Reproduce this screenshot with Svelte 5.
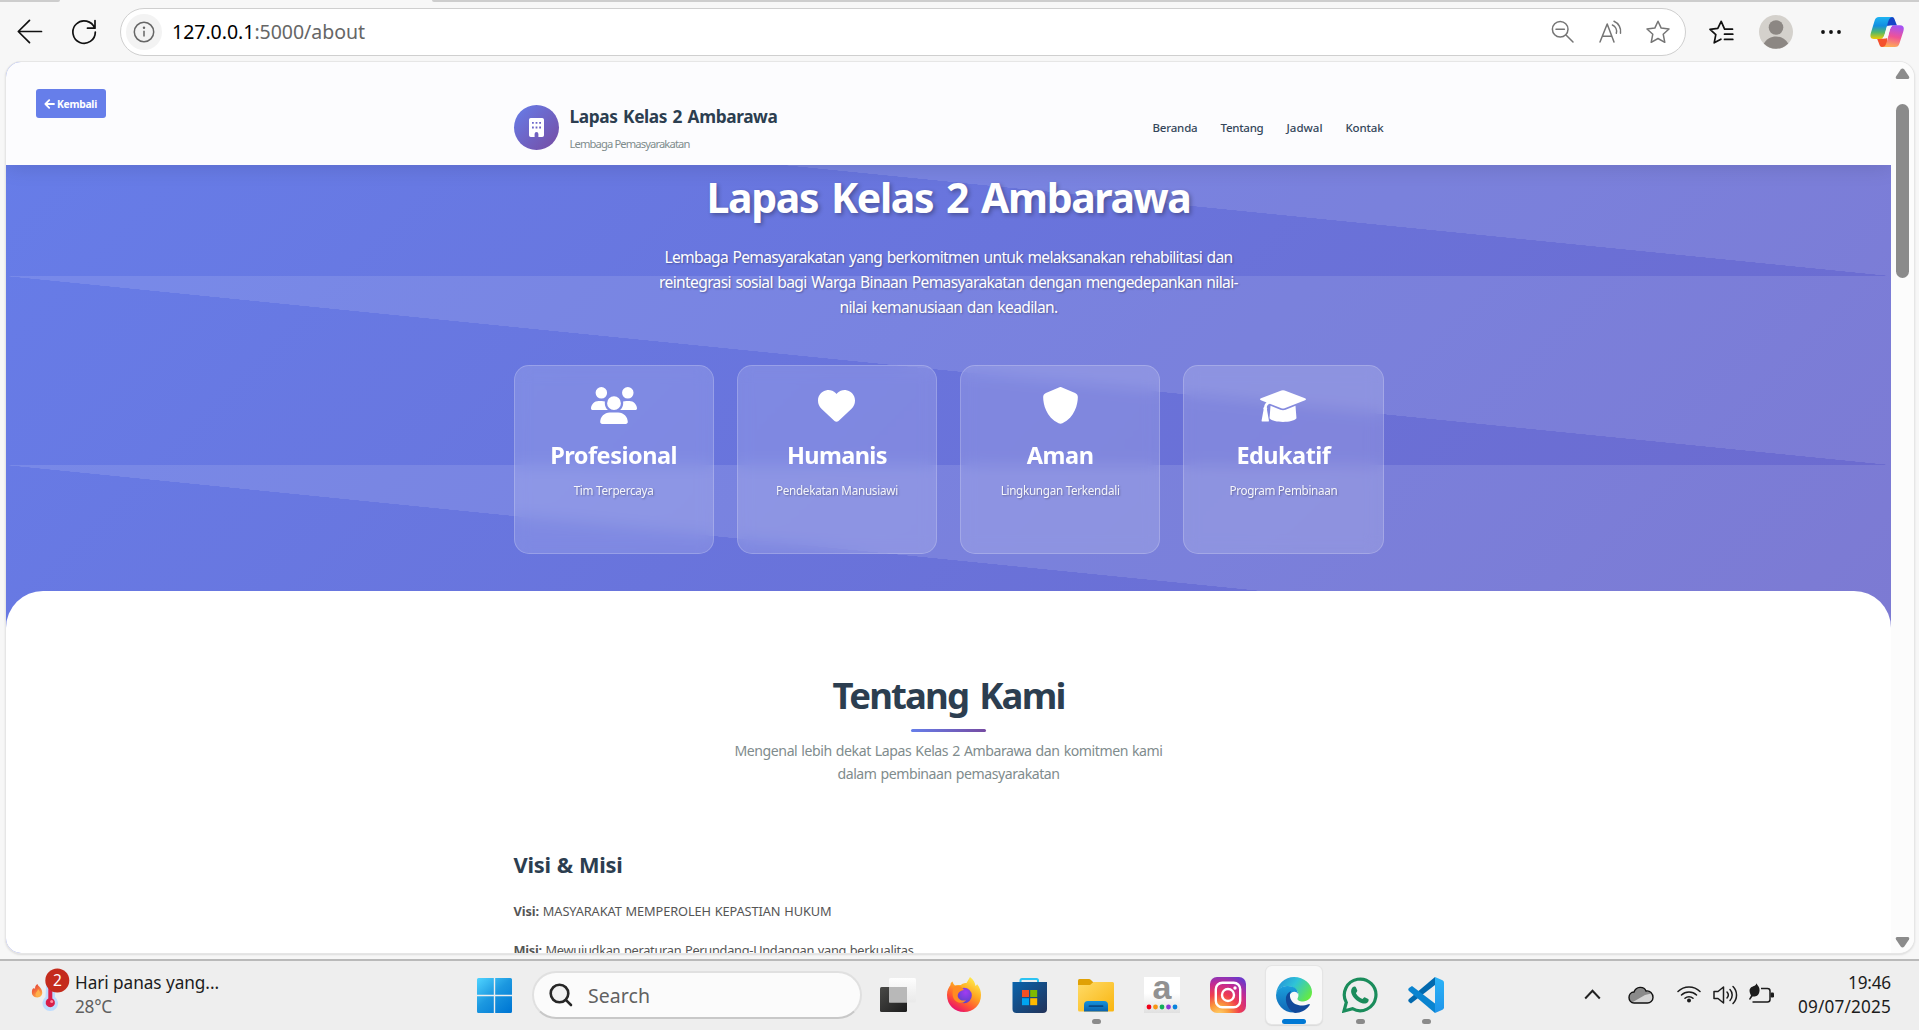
<script>
  // Spreads letter spacing so a label fills the given width in pixels.
  function fit(node, width) {
    const natural = node.getBoundingClientRect().width;
    const count = node.textContent.length;
    node.style.letterSpacing = `${(width - natural) / count}px`;
  }

  const nav = [
    { label: 'Beranda', w: 45 },
    { label: 'Tentang', w: 43 },
    { label: 'Jadwal', w: 36 },
    { label: 'Kontak', w: 38 }
  ];

  const intro = [
    { text: 'Lembaga Pemasyarakatan yang berkomitmen untuk melaksanakan rehabilitasi dan', w: 568 },
    { text: 'reintegrasi sosial bagi Warga Binaan Pemasyarakatan dengan mengedepankan nilai-', w: 579 },
    { text: 'nilai kemanusiaan dan keadilan.', w: 218 }
  ];

  const cards = [
    { icon: 'users', title: 'Profesional', tw: 127, text: 'Tim Terpercaya', w: 80 },
    { icon: 'heart', title: 'Humanis', tw: 100, text: 'Pendekatan Manusiawi', w: 122 },
    { icon: 'shield', title: 'Aman', tw: 67, text: 'Lingkungan Terkendali', w: 119 },
    { icon: 'cap', title: 'Edukatif', tw: 94, text: 'Program Pembinaan', w: 108 }
  ];
</script>

<div class="screen">
  <div class="tabs"><span class="tab-left"></span><span class="tab-right"></span></div>
  <div class="toolbar">
    <svg class="back" width="26" height="26" viewBox="0 0 26 26"><path d="M24.500 12.500H1.500M12.500 1.300L1.300 12.500 12.500 23.700" /></svg>
    <svg class="reload" width="26" height="26" viewBox="0 0 26 26"><path d="M23.600 9.200A11.200 11.200 0 1 0 24.300 13M24 1.500V9.200H16.500" /></svg>
    <div class="address">
      <span class="info">
        <svg width="22" height="22" viewBox="0 0 22 22"><circle cx="11" cy="11" r="9.700" /><path d="M11 9.800V15.600" /><circle class="dot" cx="11" cy="6.700" r="1.200" /></svg>
      </span>
      <span class="url" use:fit={193}><b>127.0.0.1</b>:5000/about</span>
      <svg class="tool zoomout" width="24" height="24" viewBox="0 0 24 24"><circle cx="9.200" cy="9.200" r="7.800" /><path d="M15 15L22 22M5 9.200H13.400" /></svg>
      <svg class="tool aloud" width="24" height="24" viewBox="0 0 24 24"><path d="M1 22L8.200 4 15 22M3.400 16.200H12.800M13.400 5A7 7 0 0 1 17.300 13.200M15 1.200A11 11 0 0 1 21.500 13.200" /></svg>
      <svg class="tool star" width="26" height="26" viewBox="0 0 26 26"><path d="M13 2.200L16.200 9.100 24 10 18.200 15.200 19.800 23.300 13 19.500 6.200 23.300 7.800 15.200 2 10 9.800 9.100Z" /></svg>
    </div>
    <svg class="favs" width="26" height="26" viewBox="0 0 26 26"><path d="M24.500 10.200H16.600L13.200 2.400 9.800 9.400 2 10.300 7.800 15.600 6.200 23.800 12.900 20.200M16.500 15.200H24.800M16.500 20.400H24.800" /></svg>
    <svg class="avatar" width="34" height="34" viewBox="0 0 34 34"><circle cx="17" cy="17" r="17" fill="#d4d1cc" /><circle cx="17" cy="12.500" r="7.300" fill="#8c8783" /><path d="M4.800 28.600C7.600 23.800 12 21.400 17 21.400S26.400 23.800 29.200 28.600A17 17 0 0 1 4.800 28.600Z" fill="#8c8783" /></svg>
    <svg class="more" width="22" height="6" viewBox="0 0 22 6"><circle cx="3" cy="3" r="1.900" /><circle cx="11" cy="3" r="1.900" /><circle cx="19" cy="3" r="1.900" /></svg>
    <svg class="copilot" width="34" height="32" viewBox="0 0 34 32">
      <defs>
        <linearGradient id="cpA" x1="0" y1="0" x2="0" y2="1"><stop offset="0" stop-color="#1fb4f2" /><stop offset=".4" stop-color="#128ee0" /><stop offset=".7" stop-color="#54b86a" /><stop offset="1" stop-color="#f0cb00" /></linearGradient>
        <linearGradient id="cpB" x1=".5" y1="0" x2=".3" y2="1"><stop offset="0" stop-color="#a653f4" /><stop offset=".5" stop-color="#ef5297" /><stop offset="1" stop-color="#ffb152" /></linearGradient>
      </defs>
      <path d="M17 1H22C24 1 24.500 3 25.200 5L27 9.500H21C18.500 9.500 18 11 17 14Z" fill="#1645c7" />
      <path d="M17 31H12C10 31 9.500 29 8.800 27L7 22.500H13C15.500 22.500 16 21 17 18Z" fill="#f4512d" />
      <path d="M9 1H23C19.500 1 18.700 4 17.500 8L14.700 18C13.700 21.500 12.500 23 9 23H4C0 23 0 20 1 16.500L4.500 5C5.500 2 6.500 1 9 1Z" fill="url(#cpA)" />
      <path d="M25 31H12C15.500 31 16 28 17 25L19.500 15C20.500 11 21.500 9.200 25 9.200H30C34 9.200 34.300 12 33.300 15.500L29.600 27C28.600 30 27.500 31 25 31Z" fill="url(#cpB)" />
      <path d="M17.300 9.800H22.200Q20.600 11 19.800 14L18 20.500Q17.200 22.500 16 22.500H12.200Q14 21.500 14.900 18Z" fill="#f7f7f7" />
    </svg>
  </div>

  <div class="viewport">
    <main class="page">
      <header class="site-head">
        <button class="kembali">
          <svg width="11" height="10" viewBox="0 0 11 10"><path d="M10 5H1.400M5.200 1.200L1.400 5 5.200 8.800" /></svg>
          <span use:fit={40}>Kembali</span>
        </button>
        <div class="wrap head-row">
          <div class="logo">
            <svg width="15" height="19" viewBox="0 0 15 19"><path fill-rule="evenodd" d="M1.800 0H13.200Q15 0 15 1.800V17.200Q15 19 13.200 19H9.400V16A1.900 1.900 0 0 0 5.600 16V19H1.800Q0 19 0 17.200V1.800Q0 0 1.800 0ZM3 4V5.800H4.800V4ZM6.600 4V5.800H8.400V4ZM10.200 4V5.800H12V4ZM3 8.600V10.400H4.800V8.600ZM6.600 8.600V10.400H8.400V8.600ZM10.200 8.600V10.400H12V8.600Z" /></svg>
          </div>
          <div class="brand">
            <div class="brand-name"><span use:fit={208}>Lapas Kelas 2 Ambarawa</span></div>
            <div class="brand-sub"><span use:fit={120}>Lembaga Pemasyarakatan</span></div>
          </div>
          <nav>
            {#each nav as item}
              <a href="#{item.label.toLowerCase()}"><span use:fit={item.w}>{item.label}</span></a>
            {/each}
          </nav>
        </div>
      </header>

      <section class="hero">
        <h1><span use:fit={484}>Lapas Kelas 2 Ambarawa</span></h1>
        <div class="intro">
          {#each intro as line}
            <div><span use:fit={line.w}>{line.text}</span></div>
          {/each}
        </div>
        <div class="wrap cards">
          {#each cards as card}
            <article>
              <div class="card-icon">
                {#if card.icon === 'users'}
                  <svg width="46" height="37" viewBox="0 0 640 512"><path d="M144 0a80 80 0 1 1 0 160A80 80 0 1 1 144 0zM512 0a80 80 0 1 1 0 160A80 80 0 1 1 512 0zM0 298.7C0 239.8 47.8 192 106.7 192h42.7c15.9 0 31 3.5 44.6 9.7c-1.3 7.2-1.9 14.7-1.9 22.3c0 38.2 16.8 72.5 43.3 96c-.2 0-.4 0-.7 0H21.3C9.6 320 0 310.4 0 298.7zM405.3 320c-.2 0-.4 0-.7 0c26.6-23.5 43.3-57.8 43.3-96c0-7.6-.7-15-1.9-22.3c13.6-6.3 28.7-9.7 44.6-9.7h42.7C592.2 192 640 239.8 640 298.7c0 11.8-9.6 21.3-21.3 21.3H405.3zM224 224a96 96 0 1 1 192 0 96 96 0 1 1 -192 0zM128 485.3C128 411.7 187.7 352 261.3 352H378.7C452.3 352 512 411.7 512 485.3c0 14.7-11.9 26.7-26.7 26.7H154.7c-14.7 0-26.7-11.9-26.7-26.7z" /></svg>
                {:else if card.icon === 'heart'}
                  <svg width="37" height="37" viewBox="0 0 512 512"><path d="M47.6 300.4L228.3 469.1c7.5 7 17.4 10.9 27.7 10.9s20.2-3.9 27.7-10.9L464.4 300.4c30.4-28.3 47.6-68 47.6-109.5v-5.8c0-69.9-50.5-129.5-119.4-141C347 36.5 300.6 51.4 268 84L256 96 244 84c-32.6-32.6-79-47.5-124.6-39.9C50.5 55.6 0 115.2 0 185.1v5.8c0 41.5 17.2 81.2 47.6 109.5z" /></svg>
                {:else if card.icon === 'shield'}
                  <svg width="37" height="37" viewBox="0 0 512 512"><path d="M256 0c4.6 0 9.2 1 13.4 2.9L457.7 82.8c22 9.3 38.4 31 38.3 57.2c-.5 99.2-41.3 280.7-213.6 363.2c-16.7 8-36.1 8-52.8 0C57.3 420.7 16.5 239.2 16 140c-.1-26.2 16.3-47.9 38.3-57.2L242.7 2.9C246.8 1 251.4 0 256 0z" /></svg>
                {:else}
                  <svg width="46" height="32" viewBox="0 0 140 97"><path d="M65 1.2Q70-.4 75 1.2L137 25Q143 28 137 31L75 55Q70 57 65 55L30 41.500C24 43 22 47 20.500 52Q23 55 21 58.500L27 92Q28 96 24 96H8Q4 96 5 92L11 59Q8.500 55 12.500 51.500C13.500 45 16 40 20 37.600L3 31Q-3 28 3 25Z" /><path d="M32 48L62 60Q70 63 78 60L108 48 111 86C104 94 88 97 70 97S36 94 29 86Z" /></svg>
                {/if}
              </div>
              <h3><span use:fit={card.tw}>{card.title}</span></h3>
              <p><span use:fit={card.w}>{card.text}</span></p>
            </article>
          {/each}
        </div>
      </section>

      <section class="about">
        <h2><span use:fit={232}>Tentang Kami</span></h2>
        <div class="rule"></div>
        <div class="lead">
          <div><span use:fit={428}>Mengenal lebih dekat Lapas Kelas 2 Ambarawa dan komitmen kami</span></div>
          <div><span use:fit={222}>dalam pembinaan pemasyarakatan</span></div>
        </div>
        <div class="wrap vision">
          <h3><span use:fit={109}>Visi &amp; Misi</span></h3>
          <p><span use:fit={318}><strong>Visi:</strong> MASYARAKAT MEMPEROLEH KEPASTIAN HUKUM</span></p>
          <p><span use:fit={400}><strong>Misi:</strong> Mewujudkan peraturan Perundang-Undangan yang berkualitas</span></p>
        </div>
      </section>
    </main>
    <div class="scrollbar">
      <svg width="15" height="12" viewBox="0 0 15 12"><path d="M5.700 1.400Q7.500-.5 9.300 1.400L14 8.500Q15 11 12.500 11H2.500Q0 11 1 8.500Z" /></svg>
      <div class="thumb"></div>
      <svg class="down" width="15" height="12" viewBox="0 0 15 12"><path d="M5.700 10.600Q7.500 12.500 9.300 10.600L14 3.500Q15 1 12.500 1H2.500Q0 1 1 3.500Z" /></svg>
    </div>
  </div>

  <footer class="taskbar">
    <div class="weather">
      <svg width="40" height="46" viewBox="0 0 40 46">
        <defs><linearGradient id="flame" x1="0" y1="0" x2=".6" y2="1"><stop offset="0" stop-color="#dc3b32" /><stop offset=".5" stop-color="#f36a3d" /><stop offset="1" stop-color="#ffb04a" /></linearGradient></defs>
        <path d="M6.500 16C7 18 8 18 9.500 20 12 23 12.500 29 6.500 29.500 1 29.500 0 25 1.500 21L3 20 4 21C4 18 5 17 6.500 16Z" fill="url(#flame)" />
        <path d="M7 21C8.500 23 10 25 9 27.500 8 29.500 4.500 29 4.500 26.500 4.500 24 7 23.500 7 21Z" fill="#ffb04a" />
        <path d="M15.500 10H24V29A7.800 7.800 0 1 1 14.500 29Z" fill="#bddcff" />
        <path d="M17.300 16H21.300V30.500A4.600 4.600 0 1 1 17.300 30.500Z" fill="#d81e4a" /><circle cx="20.700" cy="33.500" r="1.500" fill="#ff8ca0" />
        <circle cx="26.300" cy="12.500" r="12" fill="#c42b1c" />
      </svg>
      <span class="badge">2</span>
      <div class="weather-text">
        <div><span use:fit={144}>Hari panas yang...</span></div>
        <div class="temp"><span use:fit={37}>28°C</span></div>
      </div>
    </div>

    <svg class="start" width="35" height="35" viewBox="0 0 35 35">
      <defs><linearGradient id="win" gradientUnits="userSpaceOnUse" x1="0" y1="0" x2="30" y2="35"><stop offset="0" stop-color="#50d4ff" /><stop offset=".5" stop-color="#1c98e0" /><stop offset="1" stop-color="#0078d4" /></linearGradient></defs>
      <path d="M1.500 0H16.800V16.800H0V1.500Q0 0 1.500 0ZM18.200 0H33.500Q35 0 35 1.500V16.800H18.200ZM0 18.200H16.800V35H1.500Q0 35 0 33.500ZM18.200 18.200H35V33.500Q35 35 33.500 35H18.200Z" fill="url(#win)" />
    </svg>

    <div class="search">
      <svg width="24" height="24" viewBox="0 0 24 24"><circle cx="10.500" cy="10.500" r="8.800" /><path d="M16.800 16.800L22 22" stroke-linecap="round" /></svg>
      <span use:fit={62}>Search</span>
    </div>

    <div class="apps">
      <div class="app">
        <svg width="36" height="36" viewBox="0 0 36 36"><defs><linearGradient id="tvd" x1="0" y1="0" x2="1" y2="1"><stop offset="0" stop-color="#4a4a48" /><stop offset="1" stop-color="#1c1c1c" /></linearGradient><linearGradient id="tvl" x1="0" y1="0" x2="0" y2="1"><stop offset="0" stop-color="#fff" stop-opacity=".95" /><stop offset="1" stop-color="#e8e8e8" stop-opacity=".75" /></linearGradient></defs><rect x="0" y="10" width="27" height="25" rx="1.500" fill="url(#tvd)" /><rect x="9" y="1" width="27" height="24.500" rx="1.500" fill="url(#tvl)" /><rect x="9" y="10" width="18" height="15.500" fill="#b8b8b8" /></svg>
      </div>
      <div class="app">
        <svg width="36" height="36" viewBox="0 0 36 36">
          <defs><linearGradient id="fx" x1=".8" y1="0" x2=".2" y2="1"><stop offset="0" stop-color="#fff34f" /><stop offset=".4" stop-color="#ffa620" /><stop offset=".7" stop-color="#ff5235" /><stop offset="1" stop-color="#e2007d" /></linearGradient><radialGradient id="fxp" cx=".6" cy=".3" r=".7"><stop offset="0" stop-color="#a13bf2" /><stop offset="1" stop-color="#5b42c9" /></radialGradient></defs>
          <path d="M24 0C28 3 29 6 29.500 9 31 8 31 7 31 7 34 11 35 14 35 18 35 28 27.500 35 18 35S1 28 1 18C1 13 3 10 4.500 8 4.500 6 5 5.500 6.500 4.500 7 6.500 8 7.500 9 8.500 11 7.500 14 8 15 8 17 6 20 6 20.500 6 22 2.500 24 0Z" fill="url(#fx)" />
          <circle cx="18" cy="18.500" r="7.800" fill="url(#fxp)" />
          <path d="M9 9C12 8 16 9 18 13 14.500 13.500 13 15 12 17 10.500 21 15 25 20 23 17 28 9 26 7 20 6 15 7 11 9 9Z" fill="#ff8c22" />
        </svg>
      </div>
      <div class="app">
        <svg width="36" height="36" viewBox="0 0 36 36"><defs><linearGradient id="store" x1="0" y1="0" x2="1" y2="1"><stop offset="0" stop-color="#0a64ad" /><stop offset="1" stop-color="#223258" /></linearGradient></defs><path d="M8.500 6V3.500Q8.500 2 10 2H24.500Q26 2 26 3.500V6" fill="none" stroke="#2cc3f2" stroke-width="2" /><path d="M.5 5H35V32Q35 36 31 36H4.500Q.5 36 .5 32Z" fill="url(#store)" /><path d="M10 13H17V20H10Z" fill="#f25022" /><path d="M18.200 13H25.200V20H18.200Z" fill="#7fba00" /><path d="M10 21.200H17V28.200H10Z" fill="#00a4ef" /><path d="M18.200 21.200H25.200V28.200H18.200Z" fill="#ffb900" /></svg>
      </div>
      <div class="app">
        <svg width="36" height="36" viewBox="0 0 36 36"><defs><linearGradient id="fold" x1="0" y1="0" x2="1" y2="1"><stop offset="0" stop-color="#ffdb68" /><stop offset="1" stop-color="#f9b50f" /></linearGradient><linearGradient id="foldb" x1="0" y1="0" x2="0" y2="1"><stop offset="0" stop-color="#1592dd" /><stop offset="1" stop-color="#0b62ac" /></linearGradient></defs><path d="M0 3.500Q0 2 1.500 2H11Q12 2 13 3L16 6V12H0Z" fill="#e0a106" /><path d="M0 8H12L15.500 5H34.500Q36 5 36 6.500V33Q36 34.500 34.500 34.500H1.500Q0 34.500 0 33Z" fill="url(#fold)" /><path d="M6 34.500V28Q6 24 10 24H26Q30 24 30 28V34.500Z" fill="url(#foldb)" /><path d="M11.500 29.200H24.500" stroke="#084a86" stroke-width="1.800" stroke-linecap="round" /></svg>
        <i class="mark"></i>
      </div>
      <div class="app">
        <div class="amazon"><span>a</span><svg width="32" height="6" viewBox="0 0 32 6"><circle cx="3" cy="3" r="2.400" fill="#f00018" /><circle cx="9.500" cy="3" r="2.400" fill="#f79413" /><circle cx="16" cy="3" r="2.400" fill="#14ad5a" /><circle cx="22.500" cy="3" r="2.400" fill="#8a38d6" /><circle cx="29" cy="3" r="2.400" fill="#0a82dd" /></svg></div>
      </div>
      <div class="app">
        <svg width="36" height="36" viewBox="0 0 36 36"><defs><radialGradient id="ig" cx=".25" cy="1.050" r="1.150"><stop offset="0" stop-color="#ffd46b" /><stop offset=".25" stop-color="#fb9a3c" /><stop offset=".5" stop-color="#f03d4e" /><stop offset=".75" stop-color="#c62a91" /><stop offset="1" stop-color="#7038c8" /></radialGradient></defs><rect width="36" height="36" rx="7" fill="url(#ig)" /><g fill="none" stroke="#fff" stroke-width="2.400"><rect x="5.800" y="5.800" width="24.400" height="24.400" rx="6.500" /><circle cx="18" cy="18" r="6" /></g><circle cx="25" cy="11" r="1.700" fill="#fff" /></svg>
      </div>
      <div class="app active">
        <svg width="36" height="36" viewBox="0 0 36 36">
          <defs><linearGradient id="edT" x1="0" y1=".2" x2="1" y2=".7"><stop offset="0" stop-color="#2590d8" /><stop offset=".45" stop-color="#2fc3d8" /><stop offset="1" stop-color="#66eb3f" /></linearGradient><linearGradient id="edL" x1="0" y1="0" x2="0" y2="1"><stop offset="0" stop-color="#1ba0dc" /><stop offset="1" stop-color="#1065b5" /></linearGradient></defs>
          <path d="M0 17C1 7 9 0 18 0 28 0 36 7 36 15 36 21 31.500 24.500 27 24.500 23 24.500 21 23 21.500 21.500 24 18 22 10 12 9 6 9 2 12 0 17Z" fill="url(#edT)" />
          <path d="M0 18C1 12 6 8.500 12 9 18 9.300 22 12 22 17 20 13 14 14.500 13 20 12 28 17 34 24 34.500 11 39 0 29 0 18Z" fill="url(#edL)" />
          <path d="M10 20C11 17 12 15.500 15 14 12 19 15 29 27 28.500 30 28.500 32 27 33.500 27 34 27 34 28 33 29 30 33 25 36 19 36 14 34 9 28 10 20Z" fill="#10499b" />
        </svg>
        <i class="mark"></i>
      </div>
      <div class="app">
        <svg width="36" height="36" viewBox="0 0 36 36"><path d="M2 34L4.300 25.500A15.800 15.800 0 1 1 10.500 31.700Z" fill="none" stroke="#1a8c5b" stroke-width="3.200" /><path d="M12.500 9.500C13.200 9.400 13.800 9.800 14 10.400L15.300 13.500C15.500 14.200 14.500 15.500 13.900 16.200 15.500 19 17.500 20.800 20.500 22.100 21.200 21.400 22 20 22.700 20.300L26.200 22C27 22.500 26.700 24 26 25 24.500 26.700 22 27 19.500 26 14.500 24.200 11 20.500 9.500 16.500 8.500 13.500 9.700 9.800 12.500 9.500Z" fill="#1a8c5b" /></svg>
        <i class="mark"></i>
      </div>
      <div class="app">
        <svg width="36" height="36" viewBox="0 0 36 36"><defs><linearGradient id="vs" x1="0" y1="0" x2="0" y2="1"><stop offset="0" stop-color="#2bb3f7" /><stop offset="1" stop-color="#2095ea" /></linearGradient></defs><path d="M3 26.500L27 8V0L1 22Q-.5 23.500 1 25Z" fill="#0269ae" /><path d="M4 9L27 26.500V36L1 14Q-.5 12.500 1 11Z" fill="#0a84d0" /><path d="M27 0L34.500 3.200Q36 4 36 5.500V30.500Q36 32 34.500 32.800L27 36Z" fill="url(#vs)" /></svg>
        <i class="mark"></i>
      </div>
    </div>

    <div class="tray">
      <svg class="chev" width="17" height="11" viewBox="0 0 17 11"><path d="M1.200 9.500L8.500 1.800 15.800 9.500" fill="none" stroke="#222" stroke-width="2" /></svg>
      <svg class="cloud" width="26" height="18" viewBox="0 0 26 18"><path d="M6 6C8 0 16 0 18 5 22 4 25 8 25 11.500 25 15 22 17 19.500 17H6C3 17 1 14.500 1 11.500 1 8.500 3 6 6 6Z" fill="#d4d4d4" /><path d="M6 6C8 0 16 0 18 5 20 5 22 6 23 7.500L17 9 4 16.500C0 14 0 6 6 6Z" fill="#8a8a8a" /><path d="M6 6C8 0 16 0 18 5 22 4 25 8 25 11.500 25 15 22 17 19.500 17H6C3 17 1 14.500 1 11.500 1 8.500 3 6 6 6Z" fill="none" stroke="#111" stroke-width="1.400" /></svg>
      <svg class="wifi" width="24" height="18" viewBox="0 0 24 18"><g fill="none" stroke="#1c1c1c" stroke-width="1.500" stroke-linecap="round"><path d="M1 6.500A15.500 15.500 0 0 1 23 6.500M4.500 10A10.600 10.600 0 0 1 19.500 10M8 13.300A5.800 5.800 0 0 1 16 13.300" /></g><circle cx="12" cy="15.500" r="2" fill="#1c1c1c" /></svg>
      <svg class="vol" width="25" height="20" viewBox="0 0 25 20"><g fill="none" stroke="#1c1c1c" stroke-width="1.500" stroke-linejoin="round" stroke-linecap="round"><path d="M1 6.500H5L10.500 2V18L5 13.500H1ZM14 7A4.500 4.500 0 0 1 14 13M17 4.500A8 8 0 0 1 17 15.500M20 1.500A12 12 0 0 1 20 18.500" /></g></svg>
      <svg class="batt" width="25" height="21" viewBox="0 0 25 21"><path d="M12 5.500H18.500Q21 5.500 21 8V16.500Q21 19 18.500 19H3.500" fill="none" stroke="#1c1c1c" stroke-width="1.500" /><rect x="21.500" y="9.500" width="3.500" height="5" rx="1.200" fill="#1c1c1c" /><path d="M7.500 0C7.500 2 11 3 10.500 8 10 13 6 14 3.500 13.500L1 17 0 16 2 12.500C-1.500 6 2 4 5 3 6.500 2.500 7.500 1 7.500 0Z" fill="#1c1c1c" /></svg>
      <div class="clock">
        <div><span use:fit={43}>19:46</span></div>
        <div><span use:fit={93}>09/07/2025</span></div>
      </div>
    </div>
  </footer>
</div>

<style>
  :global(body) {
    margin: 0;
    overflow: hidden;
    font-family: 'Noto Sans', 'Open Sans', sans-serif;
  }
  .screen {
    width: 1919px;
    height: 1030px;
    display: flex;
    flex-direction: column;
    background: #f7f7f7;
    overflow: hidden;
  }
  svg { display: block; flex: none; }
  span { white-space: nowrap; }
  h1, h2, h3, p { margin: 0; }

  .tabs { height: 2px; display: flex; justify-content: space-between; }
  .tab-left { width: 60px; background: #cdcdcd; border-radius: 0 0 3px 0; }
  .tab-right { width: 1487px; background: #cdcdcd; border-radius: 0 0 0 3px; }

  .toolbar {
    height: 60px;
    box-sizing: border-box;
    padding: 6px 15px 7px 17px;
    display: flex;
    align-items: center;
  }
  .back, .reload, .favs { fill: none; stroke: #111; stroke-width: 1.7; stroke-linejoin: round; stroke-linecap: round; }
  .reload { margin-left: 28px; }
  .address {
    width: 1566px;
    height: 48px;
    box-sizing: border-box;
    margin-left: 23px;
    border: 1.5px solid #cfcfcf;
    border-radius: 24px;
    background: #fff;
    display: flex;
    align-items: center;
    padding: 0 14px 0 5px;
  }
  .info {
    width: 36px;
    height: 36px;
    border-radius: 50%;
    background: #f3f3f3;
    display: flex;
    align-items: center;
    justify-content: center;
  }
  .info svg { fill: none; stroke: #666; stroke-width: 1.5; }
  .info .dot { fill: #666; stroke: none; }
  .url { margin: 1px 0 0 10px; font-size: 19.5px; line-height: 26px; color: #666; }
  .url b { font-weight: 400; color: #000; }
  .tool { fill: none; stroke: #757575; stroke-width: 1.5; stroke-linejoin: round; stroke-linecap: round; }
  .zoomout { margin-left: auto; }
  .aloud { margin-left: 24px; }
  .star { margin-left: 22px; }
  .favs { margin-left: 22px; }
  .avatar { margin-left: 25px; }
  .more { margin-left: 27px; fill: #111; }
  .copilot { margin-left: auto; }

  .viewport {
    height: 891px;
    margin: 0 5px 0 6px;
    display: flex;
    border-radius: 15px;
    overflow: hidden;
    background: #fff;
    box-shadow: 0 0 0 1px #e6e6e6, 0 1px 2px 1px #dcdcdc;
    flex: none;
  }
  .page {
    width: 1885px;
    flex: none;
    overflow: hidden;
    background: linear-gradient(135deg, #667eea 0%, #764ba2 100%) 0 -100px / 1885px 4600px no-repeat;
  }
  .wrap { width: 870px; margin: 0 auto; }
  .site-head {
    position: relative;
    z-index: 2;
    height: 103px;
    box-sizing: border-box;
    padding-top: 43px;
    background: #fcfcfe;
    box-shadow: 0 2px 20px rgba(0, 0, 0, 0.12);
  }
  .kembali {
    position: absolute;
    left: 30px;
    top: 27px;
    width: 70px;
    height: 29px;
    padding: 0 0 0 8px;
    border: 0;
    border-radius: 3px;
    background: #667eea;
    color: #fff;
    font: bold 10.3px 'Noto Sans', sans-serif;
    display: flex;
    align-items: center;
    gap: 2px;
  }
  .kembali svg { fill: none; stroke: #fff; stroke-width: 1.8; stroke-linecap: round; stroke-linejoin: round; }
  .head-row { display: flex; height: 45px; }
  .logo {
    width: 45px;
    height: 45px;
    border-radius: 50%;
    background: linear-gradient(135deg, #667eea, #764ba2);
    display: flex;
    align-items: center;
    justify-content: center;
  }
  .logo svg { fill: #fff; }
  .brand { margin-left: 11px; }
  .brand-name { font-size: 17.3px; font-weight: 700; line-height: 24px; color: #2c3e50; word-spacing: 0.08em; }
  .brand-sub { margin-top: 7px; font-size: 11.2px; line-height: 16px; color: #7f8c8d; }
  nav { margin-left: auto; display: flex; align-items: center; gap: 23px; }
  nav a { font-size: 11.5px; line-height: 16px; font-weight: 500; color: #34465a; text-decoration: none; }

  .hero {
    height: 463px;
    margin-bottom: -37px;
    box-sizing: border-box;
    padding-top: 7px;
    text-align: center;
    color: #fff;
    background:
      linear-gradient(to bottom left, rgba(255, 255, 255, 0.11) 50%, transparent 50.05%) 0 -78px / 1885px 189px repeat-y;
  }
  h1 { font-size: 41px; line-height: 50px; font-weight: 700; word-spacing: 0.09em; text-shadow: 2px 2px 4px rgba(0, 0, 0, 0.3); }
  .intro { margin-top: 23px; font-size: 15.6px; line-height: 25px; word-spacing: 0.07em; text-shadow: 1px 1px 2px rgba(0, 0, 0, 0.3); }
  .cards { margin-top: 45px; display: grid; grid-template-columns: repeat(4, 1fr); gap: 23px; }
  article {
    height: 189px;
    box-sizing: border-box;
    padding-top: 21px;
    border: 1px solid rgba(255, 255, 255, 0.2);
    border-radius: 15px;
    background: rgba(255, 255, 255, 0.15);
    backdrop-filter: blur(8px);
  }
  .card-icon { height: 37px; display: flex; align-items: center; justify-content: center; }
  .card-icon svg { fill: #fff; }
  article h3 { margin-top: 15px; font-size: 23.5px; line-height: 32px; font-weight: 700; }
  article p { margin-top: 8.5px; font-size: 11.7px; line-height: 20px; color: rgba(255, 255, 255, 0.92); text-shadow: 1px 1px 2px rgba(0, 0, 0, 0.3); }

  .about {
    position: relative;
    height: 362px;
    box-sizing: border-box;
    padding-top: 79px;
    border-radius: 37px 37px 0 0;
    background: #fff;
    text-align: center;
  }
  h2 { font-size: 36.5px; line-height: 50px; font-weight: 700; color: #2c3e50; word-spacing: 0.09em; }
  .rule { width: 75px; height: 3px; margin: 9px auto 7px; border-radius: 2px; background: linear-gradient(90deg, #667eea, #764ba2); }
  .lead { font-size: 14.1px; line-height: 23px; color: #7f8c8d; word-spacing: 0.06em; }
  .vision { margin-top: 65px; text-align: left; color: #555; font-size: 12.8px; word-spacing: 0.05em; }
  .vision h3 { font-size: 21.8px; line-height: 30px; font-weight: 700; color: #2c3e50; margin-bottom: 21px; }
  .vision p { line-height: 20px; margin-bottom: 19px; }

  .scrollbar {
    width: 23px;
    flex: none;
    box-sizing: border-box;
    background: #fcfcfc;
    display: flex;
    flex-direction: column;
    align-items: center;
    padding: 6px 0 5px;
  }
  .scrollbar svg { fill: #8b8b8b; }
  .thumb { width: 13px; height: 174px; margin-top: 24px; border-radius: 7px; background: #8b8b8b; }
  .scrollbar .down { margin-top: auto; }

  .taskbar {
    height: 71px;
    margin-top: 6px;
    box-sizing: border-box;
    border-top: 2px solid #b9b9b9;
    background: #eee;
    display: flex;
    flex: none;
  }
  .weather { position: relative; width: 477px; box-sizing: border-box; padding: 7px 0 0 31px; display: flex; }
  .badge { position: absolute; left: 51.5px; top: 8px; color: #fff; font-size: 15.5px; line-height: 22px; width: 12px; text-align: center; }
  .weather-text { margin-left: 4px; font-size: 17.2px; line-height: 24px; color: #1c1c1c; padding-top: 3px; }
  .temp { color: #5f5f5f; }
  .start { margin-top: 17px; }
  .search {
    width: 330px;
    height: 48px;
    box-sizing: border-box;
    margin: 10px 0 0 20px;
    padding-left: 15px;
    border: 2px solid #e0e0e0;
    border-bottom-color: #c8c8c8;
    border-radius: 24px;
    background: #fbfbfb;
    display: flex;
    align-items: center;
    gap: 15px;
    color: #616161;
    font-size: 19.5px;
  }
  .search svg { fill: #f1f1f1; stroke: #262626; stroke-width: 2.6; }
  .apps { display: flex; margin: 5px 0 0 8px; gap: 10px; }
  .app {
    width: 56px;
    height: 58px;
    box-sizing: border-box;
    padding-top: 11px;
    border-radius: 6px;
    display: flex;
    flex-direction: column;
    align-items: center;
  }
  .mark { width: 9px; height: 5px; border-radius: 3px; margin-top: 6px; background: #8a8a8a; }
  .active { background: #f8f8f8; box-shadow: 0 0 0 1px #e5e5e5, 0 1px 1px 1px #dadada; }
  .active .mark { width: 24px; background: #0078d4; }
  .amazon {
    width: 36px;
    height: 36px;
    background: linear-gradient(#fff 45%, #e0e0e0);
    display: flex;
    flex-direction: column;
    align-items: center;
  }
  .amazon span { font: bold 34px/36px 'Liberation Sans', sans-serif; height: 26px; margin-top: -8px; padding-bottom: 8.5px; color: #919191; }
  .tray { margin-left: auto; padding-right: 28px; display: flex; }
  .chev { margin-top: 28px; }
  .cloud { margin: 25px 0 0 27px; }
  .wifi { margin: 24px 0 0 23px; }
  .vol { margin: 24px 0 0 12px; }
  .batt { margin: 22px 0 0 11px; }
  .clock { width: 93px; margin: 10px 0 0 24px; text-align: right; font-size: 17.2px; line-height: 24px; color: #1c1c1c; }
</style>
